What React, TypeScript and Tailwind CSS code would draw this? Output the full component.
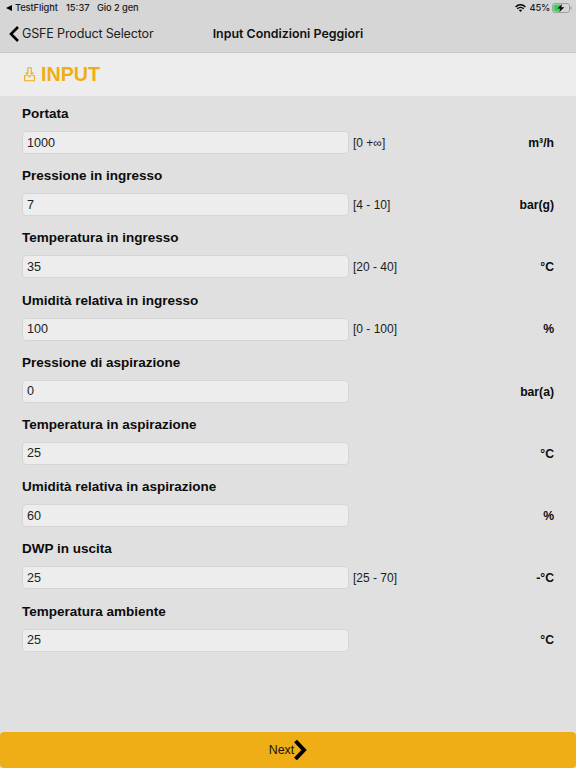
import { useState } from 'react';

type Field = { label: string; value: string; range?: string; unit: string };

const FIELDS: Field[] = [
  { label: 'Portata', value: '1000', range: '[0 +∞]', unit: 'm³/h' },
  { label: 'Pressione in ingresso', value: '7', range: '[4 - 10]', unit: 'bar(g)' },
  { label: 'Temperatura in ingresso', value: '35', range: '[20 - 40]', unit: '°C' },
  { label: 'Umidità relativa in ingresso', value: '100', range: '[0 - 100]', unit: '%' },
  { label: 'Pressione di aspirazione', value: '0', unit: 'bar(a)' },
  { label: 'Temperatura in aspirazione', value: '25', unit: '°C' },
  { label: 'Umidità relativa in aspirazione', value: '60', unit: '%' },
  { label: 'DWP in uscita', value: '25', range: '[25 - 70]', unit: '-°C' },
  { label: 'Temperatura ambiente', value: '25', unit: '°C' },
];

const StatusBar = () => (
  <div className="flex h-4 items-center pl-[6px] pr-[4px] text-[9.3px] font-medium leading-none text-[#1c1c1c]">
    <svg className="mr-[3px] h-[6px] w-[6px]" viewBox="0 0 6 6"><path d="M0 3L6 0V6Z" fill="#000" /></svg>
    <span className="w-[51px] tracking-[-0.01em]">TestFlight</span>
    <span className="w-[31px]">15:37</span>
    <span className="tracking-[-0.01em]">Gio 2 gen</span>
    <svg className="ml-auto h-[8px] w-[11px]" viewBox="0 0 11 8" fill="none" stroke="#000" strokeWidth="1.5">
      <path d="M.6 3C3.4.1 7.6.1 10.4 3M2.3 4.8c1.8-1.8 4.6-1.8 6.4 0" />
      <path d="M3.8 6.1c1-.9 2.4-.9 3.4 0L5.5 7.9Z" fill="#000" stroke="none" />
    </svg>
    <span className="ml-[3px] tracking-[-0.02em]">45%</span>
    <svg className="ml-[2px] h-[10px] w-[20px]" viewBox="0 0 20 10">
      <rect x=".5" y=".5" width="17" height="9" rx="2.3" fill="none" stroke="#a0a0a0" />
      <path d="M3 1.5h5.5v7H3A1.5 1.5 0 0 1 1.5 7V3A1.5 1.5 0 0 1 3 1.5Z" fill="#3ccc59" />
      <path d="M10.2 1L5.3 5.6h3L7.4 9l5-4.7H9.2Z" fill="#000" />
      <path d="M19 3.5v3" stroke="#929292" strokeWidth="1" />
    </svg>
  </div>
);

const NavBar = () => (
  <div className="grid h-[36px] grid-cols-[1fr_auto_1fr] items-center pl-[9px] pr-[9px] text-[12.6px] leading-none">
    <button className="flex items-center text-[#222]">
      <svg className="mr-[3px] h-[16px] w-[10px]" viewBox="0 0 10 16" fill="none" stroke="#000" strokeWidth="2.6">
        <path d="M9 1L2 8l7 7" />
      </svg>
      <span className="whitespace-nowrap pt-px tracking-[-0.015em]">GSFE Product Selector</span>
    </button>
    <h1 className="pt-px text-[12.4px] font-semibold text-[#111]">Input Condizioni Peggiori</h1>
    <span />
  </div>
);

const FieldRow = ({ field }: { field: Field }) => {
  const [value, setValue] = useState(field.value);

  return (
    <div className="h-[62.2px]">
      <label className="block h-[35px] pt-[10px] text-[13.5px] font-bold leading-4 text-[#0c0c0c]">{field.label}</label>
      <div className="flex h-[23px] items-center text-[12px]">
        <input
          className="h-[23px] w-[327px] rounded-[4px] border border-[#d5d5d5] bg-[#ededed] px-1 text-[12.6px] text-[#222] outline-none"
          value={value}
          onChange={e => setValue(e.target.value)}
        />
        <span className="ml-1 text-[#1c1c1c]">{field.range}</span>
        <span className="ml-auto pt-px text-[12.2px] font-bold text-[#0c0c0c]">{field.unit}</span>
      </div>
    </div>
  );
};

export default function App() {
  return (
    <div className="flex h-screen w-full flex-col overflow-hidden bg-[#e0e0e0] font-['Liberation_Sans',sans-serif]">
      <header className="h-[53px] shrink-0 border-b border-[#c8c8c8] bg-[#d6d6d6] font-['Inter',sans-serif]">
        <StatusBar />
        <NavBar />
      </header>
      <div className="flex h-[43px] shrink-0 items-center bg-[#ededed] pl-[24px] text-[#f0ad14]">
        <svg className="mr-[6px] h-[15px] w-[11px]" viewBox="0 0 11 15" fill="none" stroke="currentColor" strokeWidth="1.1">
          <path d="M3.8.7h3.4v5.4h1.7L5.5 10 2.1 6.1h1.7Z" />
          <path d="M2.6 8.5H.6v5.2h9.8V8.5h-2" />
        </svg>
        <h2 className="text-[19.7px] font-bold leading-none">INPUT</h2>
      </div>
      <main className="flex-1 pl-[22px] pr-[22px]">
        {FIELDS.map(field => <FieldRow key={field.label} field={field} />)}
      </main>
      <button className="flex h-9 w-full shrink-0 items-center justify-center rounded-[4px] bg-[#efad16] text-[12.4px] text-[#17140c]">
        <span>Next</span>
        <svg className="h-[22px] w-[13px]" viewBox="0 0 13 22" fill="none" stroke="#000" strokeWidth="4">
          <path d="M1.5 2L10 11l-8.5 9" />
        </svg>
      </button>
    </div>
  );
}
